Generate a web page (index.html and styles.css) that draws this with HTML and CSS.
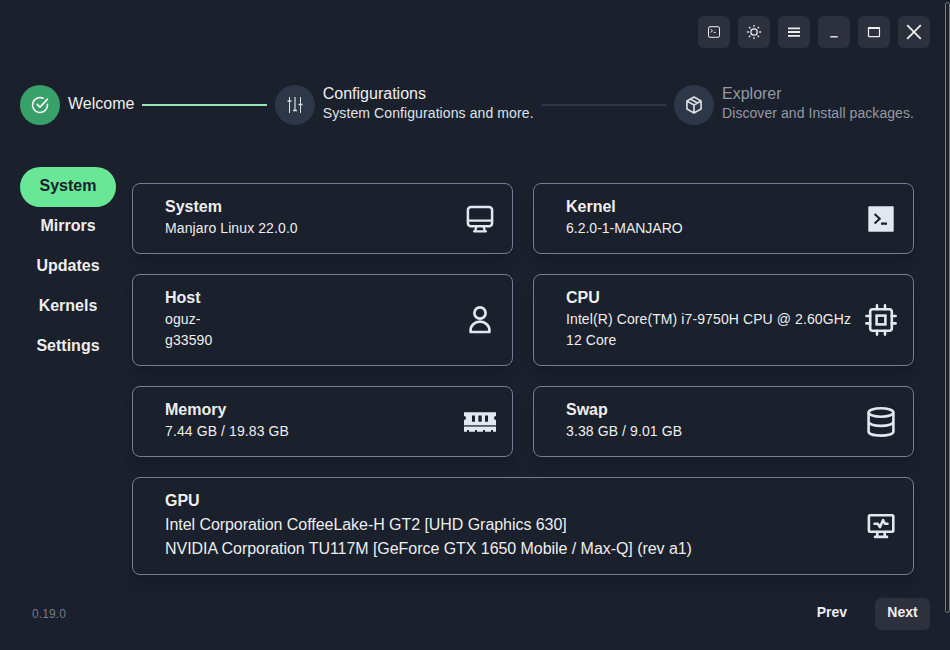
FILE: index.html
```html
<!DOCTYPE html>
<html lang="en">
<head>
<meta charset="utf-8">
<title>System</title>
<link rel="stylesheet" href="styles.css">
</head>
<body>
<header class="toolbar">
  <button class="tool" aria-label="Terminal"><svg width="14" height="14" viewBox="0 0 14 14" fill="none" stroke="currentColor"><rect x="1.5" y="1.7" width="11" height="10.6" rx="1.5"/><path d="M3.6 4.2l2 1.6-2 1.6M6.6 7.4h2.2" stroke-width=".9"/></svg></button>
  <button class="tool" aria-label="Theme"><svg width="16" height="16" viewBox="0 0 16 16" fill="none" stroke="currentColor" stroke-width="1.3"><circle cx="8" cy="8" r="3.2"/><path d="M8 1v1.8M8 13.2V15M1 8h1.8M13.2 8H15M3 3l1.4 1.4M11.6 11.6L13 13M13 3l-1.4 1.4M4.4 11.6L3 13"/></svg></button>
  <button class="tool" aria-label="Menu"><svg width="16" height="16" viewBox="0 0 16 16" fill="none" stroke="currentColor" stroke-width="1.8"><path d="M2 4.4h12M2 8h12M2 11.8h12"/></svg></button>
  <button class="tool" aria-label="Minimize"><svg width="16" height="16" viewBox="0 0 16 16" fill="none" stroke="currentColor" stroke-width="1.4"><path d="M4.3 12.8h7.4"/></svg></button>
  <button class="tool" aria-label="Maximize"><svg width="16" height="16" viewBox="0 0 16 16" fill="none" stroke="currentColor" stroke-width="1.2"><rect x="2.5" y="3.5" width="11" height="9.2" rx=".6"/><path d="M2 4h12" stroke-width="2"/></svg></button>
  <button class="tool" aria-label="Close"><svg width="16" height="16" viewBox="0 0 16 16" fill="none" stroke="currentColor" stroke-width="1.8"><path d="M1.2 1.2l13.6 13.6M14.8 1.2L1.2 14.8"/></svg></button>
</header>

<nav class="steps">
  <div class="step">
    <span class="dot done"><svg width="20" height="20" viewBox="0 0 24 24" fill="none" stroke="currentColor" stroke-width="1.9" stroke-linecap="round" stroke-linejoin="round"><path d="M21 11.1v.9a9 9 0 1 1-5.3-8.2"/><path d="M8.7 11.2l3.3 3.3 9-9.5"/></svg></span>
    <div class="label single"><div class="name">Welcome</div></div>
  </div>
  <span class="line filled"></span>
  <div class="step">
    <span class="dot"><svg width="20" height="20" viewBox="0 0 20 20" fill="none" stroke="currentColor"><path d="M4.5 2v16M15.5 2v16"/><path d="M10 2v14" stroke-width="2" opacity=".6"/><path d="M2.5 6h4M8 15.5h4M13.5 9.5h4" stroke-width="1.5"/></svg></span>
    <div class="label"><div class="name">Configurations</div><div class="hint">System Configurations and more.</div></div>
  </div>
  <span class="line"></span>
  <div class="step pending">
    <span class="dot"><svg width="20" height="20" viewBox="0 0 24 24" fill="none" stroke="currentColor" stroke-width="2" stroke-linecap="round" stroke-linejoin="round"><path d="M12 2.5l8.5 4.6v9.8L12 21.5l-8.5-4.6V7.1zM3.5 7.1L12 12l8.5-4.9M12 12v9.5M7.7 4.8l8.5 4.9"/></svg></span>
    <div class="label"><div class="name">Explorer</div><div class="hint">Discover and Install packages.</div></div>
  </div>
</nav>

<main class="content">
  <div class="tabs">
    <a class="tab active">System</a>
    <a class="tab">Mirrors</a>
    <a class="tab">Updates</a>
    <a class="tab">Kernels</a>
    <a class="tab">Settings</a>
  </div>
  <section class="cards">
    <article class="card">
      <div class="info"><h2>System</h2><p>Manjaro Linux 22.0.0</p></div>
      <svg class="icon" viewBox="0 0 32 32" fill="none" stroke="currentColor" stroke-width="2.5"><rect x="3.9" y="3.9" width="24.2" height="19.4" rx="3"/><path d="M4 17.7h24M12.4 23.5l-1.3 4.8M19.6 23.5l1.3 4.8" stroke-width="2.3"/><path d="M10 28.3h12" stroke-width="2.2" stroke-linecap="round"/></svg>
    </article>
    <article class="card">
      <div class="info"><h2>Kernel</h2><p class="tight">6.2.0-1-MANJARO</p></div>
      <svg class="icon" viewBox="0 0 32 32" fill="none"><rect x="3.3" y="3.3" width="25.4" height="25.4" rx=".7" fill="currentColor"/><path d="M9.6 11l5.1 4.7-5.1 4.7M16 20.6h6" stroke="#1a202c" stroke-width="2.1"/></svg>
    </article>
    <article class="card">
      <div class="info"><h2>Host</h2><p>oguz-<br>g33590</p></div>
      <svg class="icon" viewBox="0 0 32 32" fill="none" stroke="currentColor" stroke-width="2.7"><circle cx="16" cy="9" r="5.6"/><path d="M6.6 28v-1.7c0-4.9 4-8.6 9.4-8.6s9.4 3.7 9.4 8.6V28z" stroke-linejoin="round"/></svg>
    </article>
    <article class="card">
      <div class="info"><h2>CPU</h2><p>Intel(R) Core(TM) i7-9750H CPU @ 2.60GHz<br>12 Core</p></div>
      <svg class="icon" viewBox="0 0 32 32" fill="none" stroke="currentColor" stroke-width="2.6" stroke-linecap="round"><rect x="5.2" y="5.2" width="21.6" height="21.6" rx="2.5"/><rect x="11.6" y="11.6" width="8.8" height="8.8"/><path d="M12 1.4v3.8M20 1.4v3.8M12 26.8v3.8M20 26.8v3.8M1.4 12h3.8M1.4 19.4h3.8M26.8 12h3.8M26.8 19.4h3.8"/></svg>
    </article>
    <article class="card">
      <div class="info"><h2>Memory</h2><p>7.44 GB / 19.83 GB</p></div>
      <svg class="icon" viewBox="0 0 32 32" fill="currentColor"><path fill-rule="evenodd" d="M0 6.3h32v3.8a2 2 0 0 0 0 4v4.9H0v-4.9a2 2 0 0 0 0-4zM8 9.5v6.3h3V9.5zM14.4 9.5v6.3h3.3V9.5zM21 9.5v6.3h3V9.5z"/><path d="M0 19h32v1.8H0z" opacity=".3"/><path d="M0 20.8h32v5h-3V24h-2v1.8h-6V24h-2v1.8h-6V24h-2v1.8H5V24H3v1.8H0z"/></svg>
    </article>
    <article class="card">
      <div class="info"><h2>Swap</h2><p>3.38 GB / 9.01 GB</p></div>
      <svg class="icon" viewBox="0 0 32 32" fill="none" stroke="currentColor" stroke-width="2.6"><ellipse cx="16" cy="6.5" rx="12.4" ry="4.2"/><path d="M3.6 6.5v19c0 2.5 5.6 4.1 12.4 4.1s12.4-1.6 12.4-4.1v-19M3.6 15.6c0 2.5 5.6 4.3 12.4 4.3s12.4-1.8 12.4-4.3"/></svg>
    </article>
    <article class="card wide">
      <div class="info"><h2>GPU</h2><p>Intel Corporation CoffeeLake-H GT2 [UHD Graphics 630]<br>NVIDIA Corporation TU117M [GeForce GTX 1650 Mobile / Max-Q] (rev a1)</p></div>
      <svg class="icon" viewBox="0 0 32 32" fill="none" stroke="currentColor" stroke-width="2.6" stroke-linecap="round" stroke-linejoin="round"><rect x="3.9" y="5.2" width="24.4" height="16.6" rx="1.2"/><path d="M12.3 22v4.2M19.7 22v4.2M10 26.9h12"/><path d="M9.5 13.8h3.4l2 3.4 3.2-7.2 1.8 3.8h2.6" stroke-width="2.5"/></svg>
    </article>
  </section>
</main>

<footer class="footer">
  <span class="version">0.19.0</span>
  <div class="actions">
    <button class="btn">Prev</button>
    <button class="btn solid">Next</button>
  </div>
</footer>
<div class="scrollbar"></div>
</body>
</html>
```
FILE: styles.css
```css
* { box-sizing: border-box; margin: 0; padding: 0; }
body {
  height: 650px;
  overflow: hidden;
  background: #1a202c;
  color: #eeeeec;
  font: 16px/24px "Nimbus Sans", "Liberation Sans", Arial, sans-serif;
}
svg { display: block; flex: none; }
button { border: 0; font: inherit; color: inherit; }

.toolbar { display: flex; justify-content: flex-end; gap: 8px; padding: 16px 20px 0; }
.tool {
  display: flex; align-items: center; justify-content: center;
  width: 32px; height: 32px; border-radius: 6px; background: #2d303d;
}

.steps { display: flex; align-items: center; gap: 8px; height: 40px; margin: 37px 36px 0 20px; }
.step { display: flex; align-items: center; gap: 8px; flex: none; }
.dot {
  display: flex; align-items: center; justify-content: center;
  width: 40px; height: 40px; border-radius: 50%; background: #2d3748; color: #dddddd;
}
.dot.done { background: #38a169; color: #ffffff; }
.label { padding-bottom: 4px; white-space: nowrap; }
.label.single { padding-bottom: 3px; }
.name { padding-top: 1px; line-height: 20px; }
.hint { margin-top: -1px; font-size: 14px; line-height: 20px; color: #dfe3e9; letter-spacing: .1px; }
.pending .name, .pending .hint { color: #9599a2; }
.pending .hint { letter-spacing: .07px; }
.line { flex: 1; height: 2px; background: #2d3748; }
.line.filled { background: #9ae6b4; }

.content { display: flex; gap: 16px; margin: 42px 36px 0 20px; }
.tabs { width: 96px; flex: none; }
.tab {
  display: block; height: 40px; border-radius: 20px;
  font-weight: 700; line-height: 37px; text-align: center;
}
.tab.active { background: #68e796; color: #1a202c; }
.cards { flex: 1; display: grid; grid-template-columns: 1fr 1fr; gap: 20px; margin-top: 16px; }
.card {
  display: flex; align-items: center; justify-content: space-between;
  padding: 11px 16px 13px 32px;
  border: 1px solid #718096; border-radius: 8px;
  box-shadow: 0 10px 15px -3px rgba(0, 0, 0, .1), 0 4px 6px -2px rgba(0, 0, 0, .05);
}
.card h2 { font-size: 16px; line-height: 24px; }
.card p { margin: -1px 0 1px; font-size: 14px; line-height: 21px; letter-spacing: .1px; white-space: nowrap; }
.card p.tight { letter-spacing: 0; }
.wide { grid-column: span 2; }
.card.wide p { margin: 0; font-size: 16px; line-height: 24px; letter-spacing: -.05px; }
.icon { width: 32px; height: 32px; margin-top: 2px; color: #e2e8f0; }

.footer { display: flex; justify-content: space-between; margin: 23px 20px 0 32px; }
.version { color: #777b84; font-size: 12px; line-height: 32px; letter-spacing: .1px; }
.actions { display: flex; gap: 16px; }
.btn {
  height: 32px; padding: 0 12px 3px; border-radius: 6px; background: none;
  font-size: 14px; font-weight: 700; line-height: 29px;
}
.btn.solid { width: 55px; background: #2d303d; }

.scrollbar {
  position: absolute; top: 2px; right: 0; width: 5px; height: 611px;
  border: 1px solid #7d7f83; border-radius: 3px;
}
```
